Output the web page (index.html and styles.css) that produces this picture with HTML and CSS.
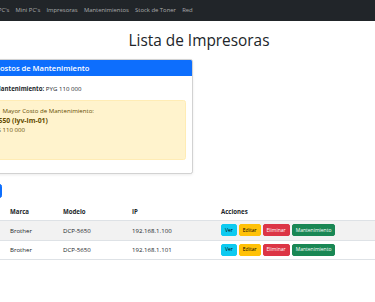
FILE: index.html
```html
<!DOCTYPE html>
<html lang="es">
<head>
<meta charset="utf-8">
<title>Lista de Impresoras</title>
<link rel="stylesheet" href="styles.css">
</head>
<body>
<nav class="navbar">
  <ul class="nav">
    <li><a class="nav-link" href="#">PC's</a></li>
    <li><a class="nav-link" href="#">Mini PC's</a></li>
    <li><a class="nav-link" href="#">Impresoras</a></li>
    <li><a class="nav-link" href="#">Mantenimientos</a></li>
    <li><a class="nav-link" href="#">Stock de Toner</a></li>
    <li><a class="nav-link" href="#">Red</a></li>
  </ul>
</nav>
<main class="page">
  <h1 class="title">Lista de Impresoras</h1>
  <section class="card">
    <h5 class="card-header">Costos de Mantenimiento</h5>
    <div class="card-body">
      <p class="total"><strong>Mantenimiento:</strong> PYG 110 000</p>
      <div class="alert">
        <p class="alert-title">Mayor Costo de Mantenimiento:</p>
        <div class="alert-detail">
          <strong class="alert-model">DCP-5550 (lyv-lm-01)</strong>
          <span class="alert-cost">PYG 110 000</span>
        </div>
      </div>
    </div>
  </section>
  <a class="btn-add" href="#">Agregar Impresora</a>
  <table class="table">
    <colgroup>
      <col class="c-id"><col class="c-marca"><col class="c-modelo"><col class="c-ip"><col class="c-acc">
    </colgroup>
    <thead>
      <tr><th>#</th><th>Marca</th><th>Modelo</th><th>IP</th><th>Acciones</th></tr>
    </thead>
    <tbody>
      <tr class="striped">
        <td>1</td><td>Brother</td><td>DCP-5650</td><td>192.168.1.100</td>
        <td><div class="actions"><a class="btn btn-info" href="#">Ver</a><a class="btn btn-warning" href="#">Editar</a><a class="btn btn-danger" href="#">Eliminar</a><a class="btn btn-success" href="#">Mantenimiento</a></div></td>
      </tr>
      <tr>
        <td>2</td><td>Brother</td><td>DCP-5650</td><td>192.168.1.101</td>
        <td><div class="actions"><a class="btn btn-info" href="#">Ver</a><a class="btn btn-warning" href="#">Editar</a><a class="btn btn-danger" href="#">Eliminar</a><a class="btn btn-success" href="#">Mantenimiento</a></div></td>
      </tr>
    </tbody>
  </table>
</main>
</body>
</html>
```
FILE: styles.css
```css
* { box-sizing: border-box; }
html, body { margin: 0; padding: 0; }
body {
  font-family: "Open Sans", "Noto Sans", sans-serif;
  font-size: 6.1px;
  line-height: 1.5;
  color: #212529;
  background: #fff;
  overflow: hidden;
}
a { text-decoration: none; }

.navbar {
  background: #212529;
  height: 21px;
  display: flex;
  align-items: center;
}
.nav {
  list-style: none;
  margin: 0 0 0 -5.2px;
  padding: 0;
  display: flex;
}
.nav-link {
  display: block;
  padding: 0 3.1px;
  color: rgba(255,255,255,.6);
  font-size: 5.9px;
}

.title {
  margin: 9.6px 0 9.6px;
  padding-left: 23px;
  text-align: center;
  font-size: 15.4px;
  font-weight: 500;
  line-height: 19.2px;
}

.card {
  margin-left: -12.3px;
  width: 205.3px;
  border: 1px solid rgba(0,0,0,.175);
  border-radius: 2.4px;
  box-shadow: 0 1px 3px rgba(0,0,0,.08);
  overflow: hidden;
}
.card-header {
  margin: 0;
  background: #0d6efd;
  color: #fff;
  font-size: 7.6px;
  font-weight: 600;
  line-height: 9.6px;
  padding: 3.2px 6.4px;
}
.card-body { padding: 6.4px; }
.total { margin: 0 0 6.4px; line-height: 9.6px; padding-top: 1px; }
.total strong { font-weight: 700; }

.alert {
  background: #fff3cd;
  border: 1px solid #ffecb5;
  border-radius: 2.4px;
  color: #664d03;
  padding: 5.5px 6.4px 25px;
  margin-bottom: 6.4px;
}
.alert-title { margin: 0; line-height: 9.4px; }
.alert-detail {
  margin-left: -13px;
  display: flex;
  flex-direction: column;
}
.alert-model {
  font-size: 6.9px;
  font-weight: 700;
  line-height: 9.4px;
  margin-left: -11px;
}
.alert-cost { line-height: 9.4px; }

.btn-add {
  display: block;
  margin: 9.6px 0 6.4px -66px;
  width: 68px;
  background: #0d6efd;
  color: #fff;
  border: 1px solid #0d6efd;
  border-radius: 2.4px;
  padding: 1.2px 4.8px;
  line-height: 9.6px;
  white-space: nowrap;
  overflow: hidden;
}

.table {
  margin-left: -20px;
  width: 440px;
  table-layout: fixed;
  border-collapse: collapse;
}
.c-id { width: 26.8px; }
.c-marca { width: 53px; }
.c-modelo { width: 69px; }
.c-ip { width: 89px; }
.table th, .table td {
  padding: 3.2px;
  text-align: left;
  vertical-align: middle;
  border-bottom: 1px solid #dee2e6;
  line-height: 9.6px;
  white-space: nowrap;
}
.table th { font-weight: 700; }
.striped td { background: #f2f2f2; }

.actions { display: flex; gap: 2px; }
.btn {
  display: inline-block;
  font-size: 5px;
  line-height: 7.6px;
  padding: 1.2px 3px;
  border: 1px solid transparent;
  border-radius: 2px;
}
.btn-info { background: #0dcaf0; border-color: #0dcaf0; color: #000; }
.btn-warning { background: #ffc107; border-color: #ffc107; color: #000; }
.btn-danger { background: #dc3545; border-color: #dc3545; color: #fff; }
.btn-success { background: #198754; border-color: #198754; color: #fff; }
```
